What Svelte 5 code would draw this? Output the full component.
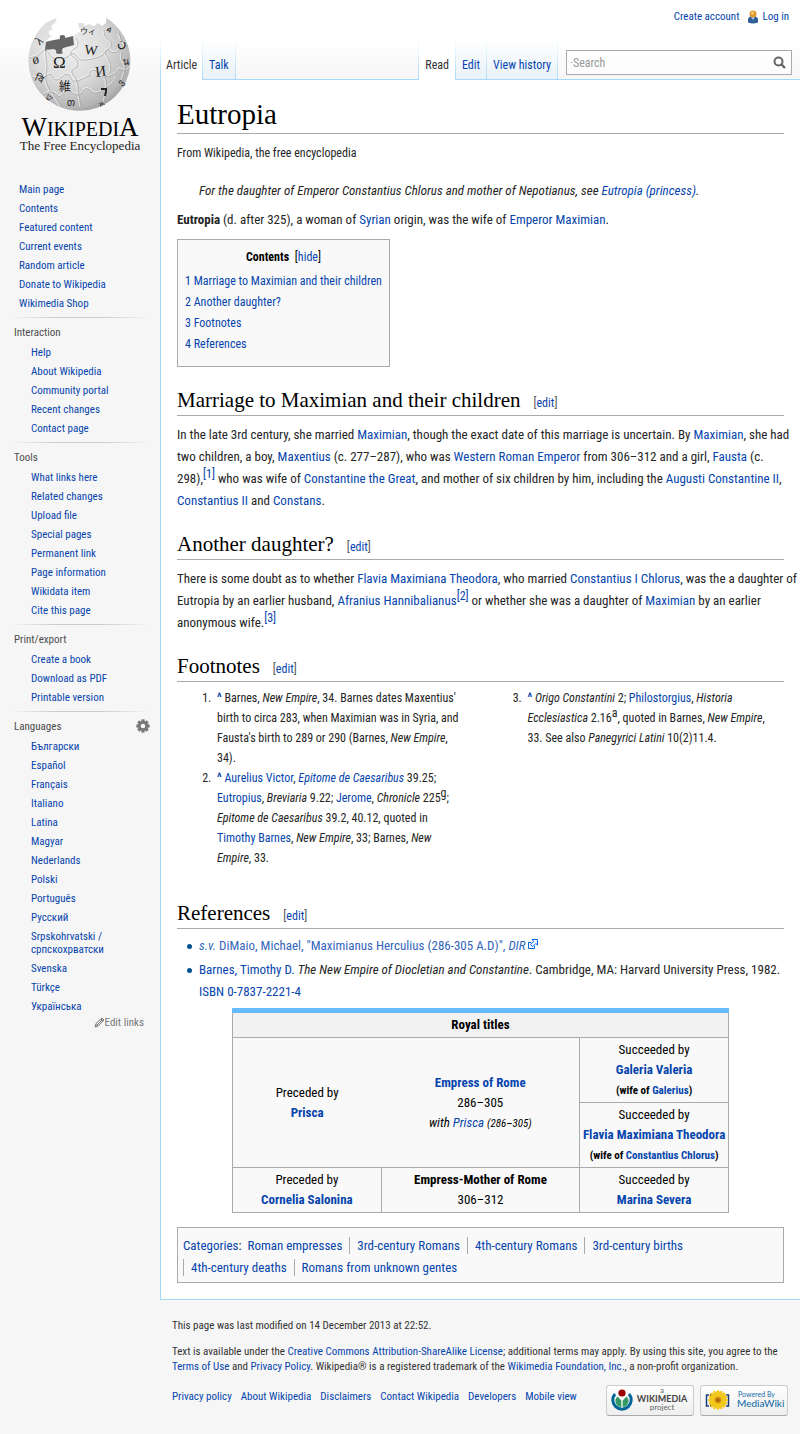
<script>
  const mainLinks = ['Main page', 'Contents', 'Featured content', 'Current events', 'Random article', 'Donate to Wikipedia', 'Wikimedia Shop'];
  const portals = [
    { title: 'Interaction', items: ['Help', 'About Wikipedia', 'Community portal', 'Recent changes', 'Contact page'] },
    { title: 'Tools', items: ['What links here', 'Related changes', 'Upload file', 'Special pages', 'Permanent link', 'Page information', 'Wikidata item', 'Cite this page'] },
    { title: 'Print/export', items: ['Create a book', 'Download as PDF', 'Printable version'] },
    { title: 'Languages', gear: true, items: ['Български', 'Español', 'Français', 'Italiano', 'Latina', 'Magyar', 'Nederlands', 'Polski', 'Português', 'Русский', 'Srpskohrvatski / српскохрватски', 'Svenska', 'Türkçe', 'Українська'] }
  ];
  const toc = ['Marriage to Maximian and their children', 'Another daughter?', 'Footnotes', 'References'];
  const categories = ['Roman empresses', '3rd-century Romans', '4th-century Romans', '3rd-century births', '4th-century deaths', 'Romans from unknown gentes'];
  const footerLinks = ['Privacy policy', 'About Wikipedia', 'Disclaimers', 'Contact Wikipedia', 'Developers', 'Mobile view'];
  const petals = Array.from({ length: 16 }, (_, i) => i * 22.5);
  const teeth = Array.from({ length: 8 }, (_, i) => i * 45);
</script>

{#snippet heading(text)}
  <h2>{text}<span class="edit">[<a href="#edit">edit</a>]</span></h2>
{/snippet}

<div class="page">
  <aside>
    <a class="logo" href="#main" aria-label="Wikipedia, The Free Encyclopedia">
      <svg viewBox="0 0 160 160" width="160" height="160">
        <defs>
          <radialGradient id="globe" cx="0.38" cy="0.32" r="0.72">
            <stop offset="0" stop-color="#f0f0f0" />
            <stop offset="0.5" stop-color="#dadada" />
            <stop offset="0.85" stop-color="#b4b4b4" />
            <stop offset="1" stop-color="#8c8c8c" />
          </radialGradient>
          <clipPath id="ball">
            <path d="M57 18Q50 20 46 23A51 50 0 1 0 115 25L111 21 106 18 106 23 102 26 98 23 94 26 89 24 85 26 83 23 78 23 79 28 82 31 77 33 73 36 63 39 46 41 49 38 52 37 49 34 49 31 53 29 51 26 55 23Z" />
          </clipPath>
        </defs>
        <g clip-path="url(#ball)">
          <rect x="28" y="15" width="106" height="100" fill="url(#globe)" />
          <g fill="none" stroke="#fff" stroke-width="1.4" opacity=".5">
            <path d="M30 57Q38 56 42 51q3-4 6 0t5 6q10 2 16-2 3-5 7-1 3 6 8 5 14-1 20-6 2-6 6-3 4 4 9-1l14-8" />
            <path d="M32 76q8 3 14-1 5-4 7 1 2 6 9 0 5-5 8-1 2 8 10 4t10-4q-1-6 4-6 5 1 4 6 10 3 18-3 2-6 6-3t10-5" />
            <path d="M43 94q7-5 13-1 3 5 7 0 4-6 10-1 4 4 9 0 3-7 8-3 4 6 12 1l7-5q4-2 6-8" />
            <path d="M48 39q-5 9-3 18t0 18q-1 11 7 19l8 12M75 38q5 8-2 11-6 3-1 8 6 2 4 10-8 3-4 8 6 7 5 15l3 17M103 30q0 8 6 11 4 5-2 8-5 4 0 9 4 6 2 15-7 3-4 8 2 8-2 21M118 33q1 7 7 13M121 52q-2 7 2 11 3 5-2 17" />
          </g>
          <g fill="none" stroke="#999" stroke-width=".6">
            <path d="M30 58Q38 57 42 52q3-4 6 0t5 6q10 2 16-2 3-5 7-1 3 6 8 5 14-1 20-6 2-6 6-3 4 4 9-1l14-8" />
            <path d="M32 77q8 3 14-1 5-4 7 1 2 6 9 0 5-5 8-1 2 8 10 4t10-4q-1-6 4-6 5 1 4 6 10 3 18-3 2-6 6-3t10-5" />
            <path d="M43 95q7-5 13-1 3 5 7 0 4-6 10-1 4 4 9 0 3-7 8-3 4 6 12 1l7-5q4-2 6-8" />
            <path d="M49 39q-5 9-3 18t0 18q-1 11 7 19l8 12M76 38q5 8-2 11-6 3-1 8 6 2 4 10-8 3-4 8 6 7 5 15l3 17M104 30q0 8 6 11 4 5-2 8-5 4 0 9 4 6 2 15-7 3-4 8 2 8-2 21M119 33q1 7 7 13M122 52q-2 7 2 11 3 5-2 17" />
          </g>
        </g>
        <path fill="#666" d="M46 42l8-2 6-1q-1-4 2-4 4 0 3 3l8-2 1 9-11 3q-2 3 0 5-4 2-7 0 1-3-2-4l-9 1Z" />
        <g class="glyphs">
          <text x="53" y="68" font-size="17">Ω</text>
          <text x="84" y="54" font-size="14" transform="rotate(6 84 54)">W</text>
          <text x="96" y="77" font-size="15" transform="rotate(-8 96 77)">И</text>
          <text x="59" y="91" font-size="12">維</text>
          <text x="80" y="34" font-size="8">ウィ</text>
          <text x="106" y="30" font-size="8" transform="rotate(35 106 30)">ል</text>
          <text x="117" y="47" font-size="13">ن</text>
          <text x="36" y="44" font-size="12" transform="rotate(-40 40 40)">λ</text>
          <text x="33" y="64" font-size="13" transform="rotate(-8 33 64)">ø</text>
          <text x="34" y="80" font-size="10" transform="rotate(25 34 80)">वि</text>
          <text x="123" y="65" font-size="9">น</text>
          <text x="120" y="83" font-size="9" transform="rotate(-50 124 83)">ვ</text>
          <text x="67" y="106" font-size="10">თ</text>
          <text x="45" y="98" font-size="9" transform="rotate(35 45 98)">ש</text>
          <text x="100" y="107" font-size="8" transform="rotate(-25 100 107)">ж</text>
          <path d="M101 89h5v2l-1 5" fill="none" stroke="#222" stroke-width="2" />
        </g>
        <text class="wordmark" x="80" y="136"><tspan class="tall">W</tspan>IKIPEDI<tspan class="tall">A</tspan></text>
        <text class="motto" x="80" y="150">The Free Encyclopedia</text>
      </svg>
    </a>

    <nav class="first" aria-label="Navigation">
      <ul>{#each mainLinks as t}<li><a href="#nav">{t}</a></li>{/each}</ul>
    </nav>
    {#each portals as p}
      <nav aria-label={p.title}>
        <h3>{p.title}
          {#if p.gear}
            <button class="gear" aria-label="Language settings">
              <svg viewBox="-8 -8 16 16" width="14" height="14">
                <g fill="#777">{#each teeth as a}<rect x="-1.8" y="-7.6" width="3.6" height="4" transform="rotate({a})" />{/each}</g>
                <circle r="4.2" fill="none" stroke="#777" stroke-width="3.2" />
              </svg>
            </button>
          {/if}
        </h3>
        <ul>{#each p.items as t}<li><a href="#nav">{t}</a></li>{/each}</ul>
      </nav>
    {/each}
    <a class="editlinks" href="#links">
      <svg viewBox="0 0 11 11" width="11" height="11"><path d="M1 10l1-3.500L8 1l2 2-5.800 6ZM2 7.500L3.800 9.200M7 2l2 2M3 8L8 3" fill="none" stroke="#777" /></svg>Edit links
    </a>
  </aside>

  <div class="main">
    <header>
      <div class="personal">
        <a href="#create">Create account</a>
        <a href="#login">
          <svg viewBox="0 0 12 14" width="12" height="14"><path d="M1 12.500V9Q2 6 6 6t5 3v3.500Q6 14.500 1 12.500Z" fill="#30609c" /><path d="M4 7l2 3 2-3Z" fill="#a9c6ea" /><circle cx="6" cy="4" r="3.500" fill="#e09a2b" /><circle cx="5.500" cy="3" r="1.500" fill="#f7cd7c" /></svg>Log in</a>
      </div>
      <div class="bar">
        <div class="tabs"><a class="on" href="#article">Article</a><a href="#talk">Talk</a></div>
        <div class="tabs views"><a class="on" href="#read">Read</a><a href="#edit">Edit</a><a href="#history">View history</a></div>
        <form class="search">
          <input type="search" aria-label="Search" placeholder="·Search" />
          <button type="button" aria-label="Go"><svg viewBox="0 0 13 13" width="13" height="13"><circle cx="5.500" cy="5.500" r="4" fill="none" stroke="#666" stroke-width="2" /><path d="M8.500 8.500l3.500 3.500" stroke="#666" stroke-width="2.400" /></svg></button>
        </form>
      </div>
    </header>

    <article>
      <h1>Eutropia</h1>
      <p class="sub">From Wikipedia, the free encyclopedia</p>
      <p class="hatnote">For the daughter of Emperor Constantius Chlorus and mother of Nepotianus, see <a href="#p">Eutropia (princess)</a>.</p>
      <p><b>Eutropia</b> (d. after 325), a woman of <a href="#p">Syrian</a> origin, was the wife of <a href="#p">Emperor Maximian</a>.</p>

      <div class="toc">
        <div class="toctitle"><b>Contents</b> [<a href="#hide">hide</a>]</div>
        <ul>{#each toc as t, i}<li><a href="#s">{i + 1} {t}</a></li>{/each}</ul>
      </div>

      {@render heading('Marriage to Maximian and their children')}
      <p class="prose">In the late 3rd century, she married <a href="#p">Maximian</a>, though the exact date of this marriage is uncertain. By <a href="#p">Maximian</a>, she had two children, a boy, <a href="#p">Maxentius</a> (c. 277–287), who was <a href="#p">Western Roman Emperor</a> from 306–312 and a girl, <a href="#p">Fausta</a> (c.<br />298),<sup><a href="#n">[1]</a></sup> who was wife of <a href="#p">Constantine the Great</a>, and mother of six children by him, including the <a href="#p">Augusti</a> <a href="#p">Constantine II</a>, <a href="#p">Constantius II</a> and <a href="#p">Constans</a>.</p>

      {@render heading('Another daughter?')}
      <p class="prose">There is some doubt as to whether <a href="#p">Flavia Maximiana Theodora</a>, who married <a href="#p">Constantius I Chlorus</a>, was the a daughter of Eutropia by an earlier husband, <a href="#p">Afranius Hannibalianus</a><sup><a href="#n">[2]</a></sup> or whether she was a daughter of <a href="#p">Maximian</a> by an earlier anonymous wife.<sup><a href="#n">[3]</a></sup></p>

      {@render heading('Footnotes')}
      <ol class="notes">
        <li><a class="up" href="#u">^</a> Barnes, <i>New Empire</i>, 34. Barnes dates Maxentius'<br />birth to circa 283, when Maximian was in Syria, and<br />Fausta's birth to 289 or 290 (Barnes, <i>New Empire</i>,<br />34).</li>
        <li><a class="up" href="#u">^</a> <a href="#p">Aurelius Victor</a>, <a href="#p"><i>Epitome de Caesaribus</i></a> 39.25;<br /><a href="#p">Eutropius</a>, <i>Breviaria</i> 9.22; <a href="#p">Jerome</a>, <i>Chronicle</i> 225<sup>g</sup>;<br /><i>Epitome de Caesaribus</i> 39.2, 40.12, quoted in<br /><a href="#p">Timothy Barnes</a>, <i>New Empire</i>, 33; Barnes, <i>New<br />Empire</i>, 33.</li>
        <li class="next"><a class="up" href="#u">^</a> <i>Origo Constantini</i> 2; <a href="#p">Philostorgius</a>, <i>Historia<br />Ecclesiastica</i> 2.16<sup>a</sup>, quoted in Barnes, <i>New Empire</i>,<br />33. See also <i>Panegyrici Latini</i> 10(2)11.4.</li>
      </ol>

      {@render heading('References')}
      <ul class="refs">
        <li><a class="ext" href="#x"><i>s.v.</i> DiMaio, Michael, "Maximianus Herculius (286-305 A.D)", <i>DIR</i><svg viewBox="0 0 11 11" width="11" height="11"><path d="M4 3.500H1.500v6h6V7" fill="#fff" stroke="#06c" /><path d="M5 .5h5.500V6L8.700 4.500 5.500 7.700 3.500 5.700 6.700 2.300Z" fill="#fff" stroke="#06f" /></svg></a></li>
        <li><a href="#p">Barnes, Timothy D.</a> <i>The New Empire of Diocletian and Constantine</i>. Cambridge, MA: Harvard University Press, 1982. <a href="#p">ISBN 0-7837-2221-4</a></li>
      </ul>

      <table>
        <thead><tr><th colspan="3">Royal titles</th></tr></thead>
        <tbody>
          <tr>
            <td rowspan="2" class="open">Preceded by<br /><a href="#p"><b>Prisca</b></a></td>
            <td rowspan="2" class="open2"><a href="#p"><b>Empress of Rome</b></a><br />286–305<br /><i>with <a href="#p">Prisca</a> <small>(286–305)</small></i></td>
            <td>Succeeded by<br /><a href="#p"><b>Galeria Valeria</b></a><br /><small><b>(wife of <a href="#p">Galerius</a>)</b></small></td>
          </tr>
          <tr><td>Succeeded by<br /><a href="#p"><b>Flavia Maximiana Theodora</b></a><br /><small><b>(wife of <a href="#p">Constantius Chlorus</a>)</b></small></td></tr>
          <tr>
            <td>Preceded by<br /><a href="#p"><b>Cornelia Salonina</b></a></td>
            <td><b>Empress-Mother of Rome</b><br />306–312</td>
            <td>Succeeded by<br /><a href="#p"><b>Marina Severa</b></a></td>
          </tr>
        </tbody>
      </table>

      <div class="cats">
        <span><a href="#c">Categories</a>:</span>
        {#each categories as c, i}<a class="cat" class:lead={i === 0} href="#c">{c}</a>{/each}
      </div>
    </article>

    <footer>
      <p>This page was last modified on 14 December 2013 at 22:52.</p>
      <p>Text is available under the <a href="#f">Creative Commons Attribution-ShareAlike License</a>; additional terms may apply. By using this site, you agree to the <a href="#f">Terms of Use</a> and <a href="#f">Privacy Policy</a>. Wikipedia® is a registered trademark of the <a href="#f">Wikimedia Foundation, Inc.</a>, a non-profit organization.</p>
      <div class="foot">
        <ul>{#each footerLinks as l}<li><a href="#f">{l}</a></li>{/each}</ul>
        <div class="badges">
          <a class="badge" href="#wm" aria-label="A Wikimedia project">
            <svg viewBox="0 0 86 29" width="86" height="29">
              <circle cx="15" cy="7" r="3.600" fill="#900" />
              <path d="M8 8A9.200 9.200 0 1 0 22 8" fill="none" stroke="#069" stroke-width="3" />
              <path d="M10.500 10.500A6 6 0 0 0 14.300 21V14.500ZM19.500 10.500A6 6 0 0 1 15.700 21V14.500Z" fill="#396" />
              <text x="55" y="7" font-size="8" text-anchor="middle" fill="#666">a</text>
              <text x="55" y="16" font-size="9" font-weight="bold" text-anchor="middle" fill="#444">WIKIMEDIA</text>
              <text x="55" y="24" font-size="8" text-anchor="middle" fill="#666">project</text>
            </svg>
          </a>
          <a class="badge" href="#mw" aria-label="Powered by MediaWiki">
            <svg viewBox="0 0 86 29" width="86" height="29">
              <path d="M8 9H5.500v11H8M25 9h2.500v11H25" fill="none" stroke="#1c3c78" stroke-width="1.500" />
              <path d="M10 8v13M23 8v13" stroke="#1c3c78" stroke-width="2" stroke-dasharray="2 1.500" />
              <g fill="#f2c81c">{#each petals as a}<ellipse cx="17" cy="8.500" rx="1.800" ry="4.500" transform="rotate({a} 17 14)" />{/each}</g>
              <circle cx="17" cy="14" r="3.300" fill="#d08b12" /><circle cx="17" cy="14" r="1.600" fill="#a65f0a" />
              <text x="37" y="11" font-size="7" fill="#1a6ea8">Powered By</text>
              <text class="mw" x="36" y="21" font-size="10">MediaWiki</text>
            </svg>
          </a>
        </div>
      </div>
    </footer>
  </div>
</div>

<style>
  :global(body) { background: #f6f6f6; }
  .page {
    display: grid;
    grid-template-columns: 160px minmax(0, 1fr);
    font-family: "Roboto Condensed", "Liberation Sans", Arial, sans-serif;
    font-size: 13px;
    line-height: 22px;
    color: #252525;
    background: linear-gradient(#fff 40px, #f6f6f6 80px) top / 100% 80px no-repeat;
  }
  a { color: #0645ad; text-decoration: none; }
  ul, ol { list-style: none; margin: 0; padding: 0; }
  p { margin: 0 0 7px; }
  sup { font-size: 12px; line-height: 0; }
  button { border: 0; padding: 0; background: none; display: flex; }

  .logo, .logo svg { display: block; }
  .logo { height: 180px; }
  .glyphs { font-family: "Liberation Serif", "Noto Sans CJK JP", "DejaVu Sans", serif; fill: #222; }
  .wordmark { font-family: "Liberation Serif", serif; font-size: 20px; fill: #000; text-anchor: middle; }
  .tall { font-size: 27px; }
  .motto { font-family: "Liberation Serif", serif; font-size: 13px; fill: #222; text-anchor: middle; }

  nav { padding-bottom: 4px; }
  nav::before { content: ""; display: block; height: 1px; margin: 0 10px; background: linear-gradient(90deg, #f6f6f6, #ccc 33%, #ccc 66%, #f6f6f6); }
  nav.first::before { display: none; }
  nav h3 { display: flex; justify-content: space-between; margin: 0; padding: 7px 10px 3px 14px; font-size: 11px; line-height: 15px; font-weight: normal; color: #4d4d4d; }
  nav ul { padding: 0 20px 0 31px; }
  nav.first ul { padding-left: 19px; }
  nav li { padding: 3px 0; font-size: 11px; line-height: 13px; }
  .editlinks { display: flex; justify-content: flex-end; align-items: center; margin-top: -4px; padding-right: 16px; font-size: 11px; line-height: 13px; color: #777; }

  header { height: 80px; display: flex; flex-direction: column; justify-content: space-between; box-shadow: inset 0 -1px #a7d7f9; }
  .personal { display: flex; justify-content: flex-end; gap: 8px; padding: 10px 11px 0 0; font-size: 11px; line-height: 14px; }
  .personal a { display: flex; gap: 3px; }
  .bar { display: flex; height: 40px; }
  .tabs { display: flex; }
  .views { margin-left: auto; }
  .tabs a { padding: 14px 6px 0; line-height: 22px; font-size: 12px; border-right: 1px solid; border-image: linear-gradient(#fff, #a7d7f9) 1; background: linear-gradient(#fff, #e8f2f8) 0 0 / 100% 39px no-repeat; }
  .tabs a:first-child { border-left: 1px solid; }
  .tabs:first-child a:first-child { padding: 14px 5px 0; }
  .tabs .on { background: #fff; color: #333; }
  .search { display: flex; align-items: center; box-sizing: border-box; width: 226px; height: 25px; margin: 10px 8px 0; padding-right: 5px; border: 1px solid #aaa; background: #fff9; }
  .search input { flex: 1; min-width: 0; border: 0; padding: 0 3px; background: none; font: inherit; font-size: 12px; outline: 0; }
  .search input::placeholder { color: #999; opacity: 1; }

  article { background: #fff; border-left: 1px solid #a7d7f9; border-bottom: 1px solid #a7d7f9; padding: 16px; }
  h1, h2 { font-family: "Liberation Serif", serif; font-weight: normal; color: #000; border-bottom: 1px solid #aaa; margin: 0; }
  h1 { font-size: 29px; line-height: 37px; margin-bottom: 8px; }
  h2 { font-size: 21px; line-height: 29px; margin: 18px 0 8px; }
  .edit { margin-left: 13px; font: 12px "Roboto Condensed", "Liberation Sans", sans-serif; color: #555; }
  .sub { margin-bottom: 16px; font-size: 12px; }
  .hatnote { padding-left: 22px; font-style: italic; }
  .prose { margin-right: -13px; }
  .toc { width: max-content; box-sizing: border-box; border: 1px solid #aaa; background: #f9f9f9; padding: 7px; font-size: 12px; line-height: 21px; margin: 8px 0 19px; color: #000; }
  .toctitle { text-align: center; margin-bottom: 3px; }
  .toctitle b { margin-right: 3px; }
  .toc ul { padding-bottom: 4px; }

  .notes { columns: 2; column-gap: 14px; font-size: 12px; line-height: 20px; margin: -2px 0 31px; list-style: decimal; }
  .notes li { margin-left: 37px; padding-left: 3px; }
  .notes .next { break-before: column; }
  .up { font-weight: bold; }
  .refs { margin-top: -2px; }
  .refs li { position: relative; padding-left: 22px; margin-bottom: 2px; }
  .refs li::before { content: ""; position: absolute; left: 10px; top: 9px; width: 5px; height: 5px; border-radius: 50%; background: #00528c; }
  .ext { color: #3366bb; }
  .ext svg { margin-left: 2px; }

  table { border-collapse: collapse; width: 497px; max-width: 100%; margin: 5px auto 14px; text-align: center; line-height: 20px; color: #000; background: #f9f9f9; }
  th, td { border: 1px solid #aaa; padding: 2px; }
  th { border-top: 5px solid #66bbff; background: #f2f2f2; }
  td { width: 30%; }
  td:nth-child(2) { width: 40%; }
  .open { border-right: 0; }
  .open2 { border-left: 0; }
  small { font-size: 11px; line-height: 0; }

  .cats { display: flex; flex-wrap: wrap; row-gap: 5px; border: 1px solid #aaa; background: #f9f9f9; padding: 9px 5px 6px; line-height: 17px; }
  .cat { padding: 0 7px; border-left: 1px solid #aaa; }
  .lead { border-left: 0; padding-left: 6px; }

  footer { padding: 18px 12px; font-size: 11px; line-height: 15px; color: #333; }
  footer p { margin-bottom: 11px; }
  .foot { display: flex; justify-content: space-between; }
  .foot ul { display: flex; gap: 9px; padding-top: 4px; }
  .badges { display: flex; gap: 6px; }
  .badge { border: 1px solid #ccc; border-bottom-color: #aaa; border-radius: 3px; background: linear-gradient(#fff, #eee); height: 29px; }
  .badge text { font-family: Lato, sans-serif; }
  .badge .mw { fill: #1a6ea8; font-weight: 500; }
</style>
